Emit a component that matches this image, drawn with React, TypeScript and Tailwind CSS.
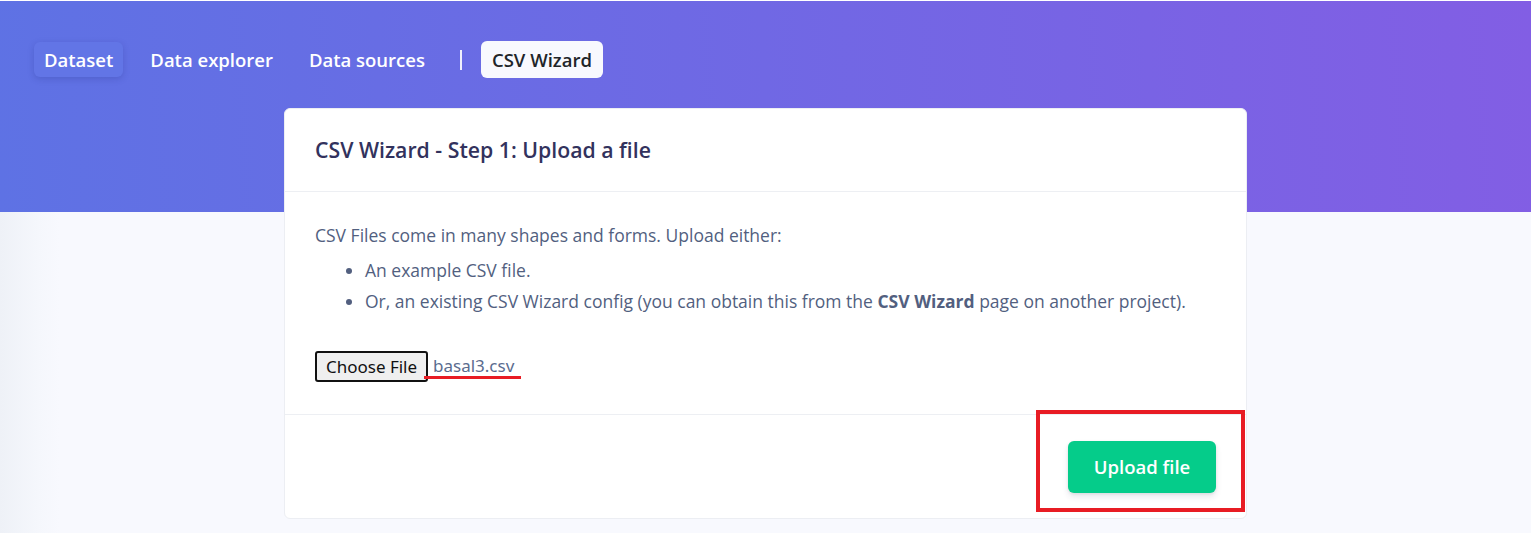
import React from "react";

export default function App() {
  return (
    <div
      className="min-h-[533px] w-[1531px] bg-[#f8f9fe] overflow-hidden"
      style={{ fontFamily: "'Open Sans', 'Noto Sans', sans-serif" }}
    >
      <div className="border-t border-white h-[212px] bg-[linear-gradient(87deg,#5e72e4_0%,#825ee4_100%)] pt-[40px] pl-[34px]">
        <nav className="flex items-center h-[37px]">
          <a className="px-[10px] h-[35px] flex items-center rounded-[6px] bg-[#6275e6] shadow-[0_2px_6px_rgba(40,50,140,0.25)] text-white font-semibold text-[18.5px]">
            Dataset
          </a>
          <a className="ml-[17px] px-[10px] h-[35px] flex items-center text-white font-semibold text-[18.5px]">
            Data explorer
          </a>
          <a className="ml-[16px] px-[10px] h-[35px] flex items-center text-white font-semibold text-[18.5px]">
            Data sources
          </a>
          <span className="ml-[25px] w-[2px] h-[20px] bg-white/90" />
          <a className="ml-[19px] pl-[11px] pr-[11px] h-[37px] flex items-center rounded-[6px] bg-[#f8f9fe] text-[#212529] font-semibold text-[18.5px]">
            CSV Wizard
          </a>
        </nav>
      </div>
      <div className="flex flex-col bg-[linear-gradient(90deg,#eef1f7_0px,#f5f7fc_38px,#f8f9fe_60px)] h-[321px]">
        <div className="relative mx-auto w-[963px] -mt-[104px] bg-white rounded-[6px] border border-[#eceef3]">
          <div className="h-[83px] px-[30px] flex items-center border-b border-[#edeff3]">
            <h3 className="text-[21.25px] font-semibold text-[#32325d]">CSV Wizard - Step 1: Upload a file</h3>
          </div>
          <div className="px-[30px] pt-[31px] pb-[32px] text-[17.5px] text-[#525f7f]">
            <p className="leading-[24px]">CSV Files come in many shapes and forms. Upload either:</p>
            <ul className="list-disc pl-[50px] mt-[8px] leading-[31px]">
              <li>An example CSV file.</li>
              <li>
                Or, an existing CSV Wizard config (you can obtain this from the <b className="font-bold">CSV Wizard</b>{" "}
                page on another project).
              </li>
            </ul>
            <div className="mt-[34px] flex items-start h-[31px]">
              <span
                className="h-[31px] w-[113px] justify-center flex items-center rounded-[3px] border-2 border-[#111] bg-[#efefef] text-[#111] text-[17px] leading-none"
                style={{ fontFamily: "'Noto Sans', sans-serif" }}
              >
                Choose File
              </span>
              <span
                className="relative -ml-[4px] pl-[9px] pr-[7px] pt-[5px] text-[17px] text-[#5a6c8f] border-b-[3px] border-[#e81c24] leading-[20px]"
                style={{ fontFamily: "'Noto Sans', sans-serif" }}
              >
                basal3.csv
              </span>
            </div>
          </div>
          <div className="relative border-t border-[#edeff3] h-[104px] flex justify-end items-center pr-[30px]">
            <button className="h-[52px] w-[148px] rounded-[6px] bg-[#05cc8a] text-white font-semibold text-[18.5px] shadow-[0_4px_6px_rgba(50,50,93,0.11),0_1px_3px_rgba(0,0,0,0.08)]">
              Upload file
            </button>
            <div className="absolute right-[1px] -top-[5px] w-[209px] h-[102px] border-[4px] border-[#e81c24]" />
          </div>
        </div>
      </div>
    </div>
  );
}
